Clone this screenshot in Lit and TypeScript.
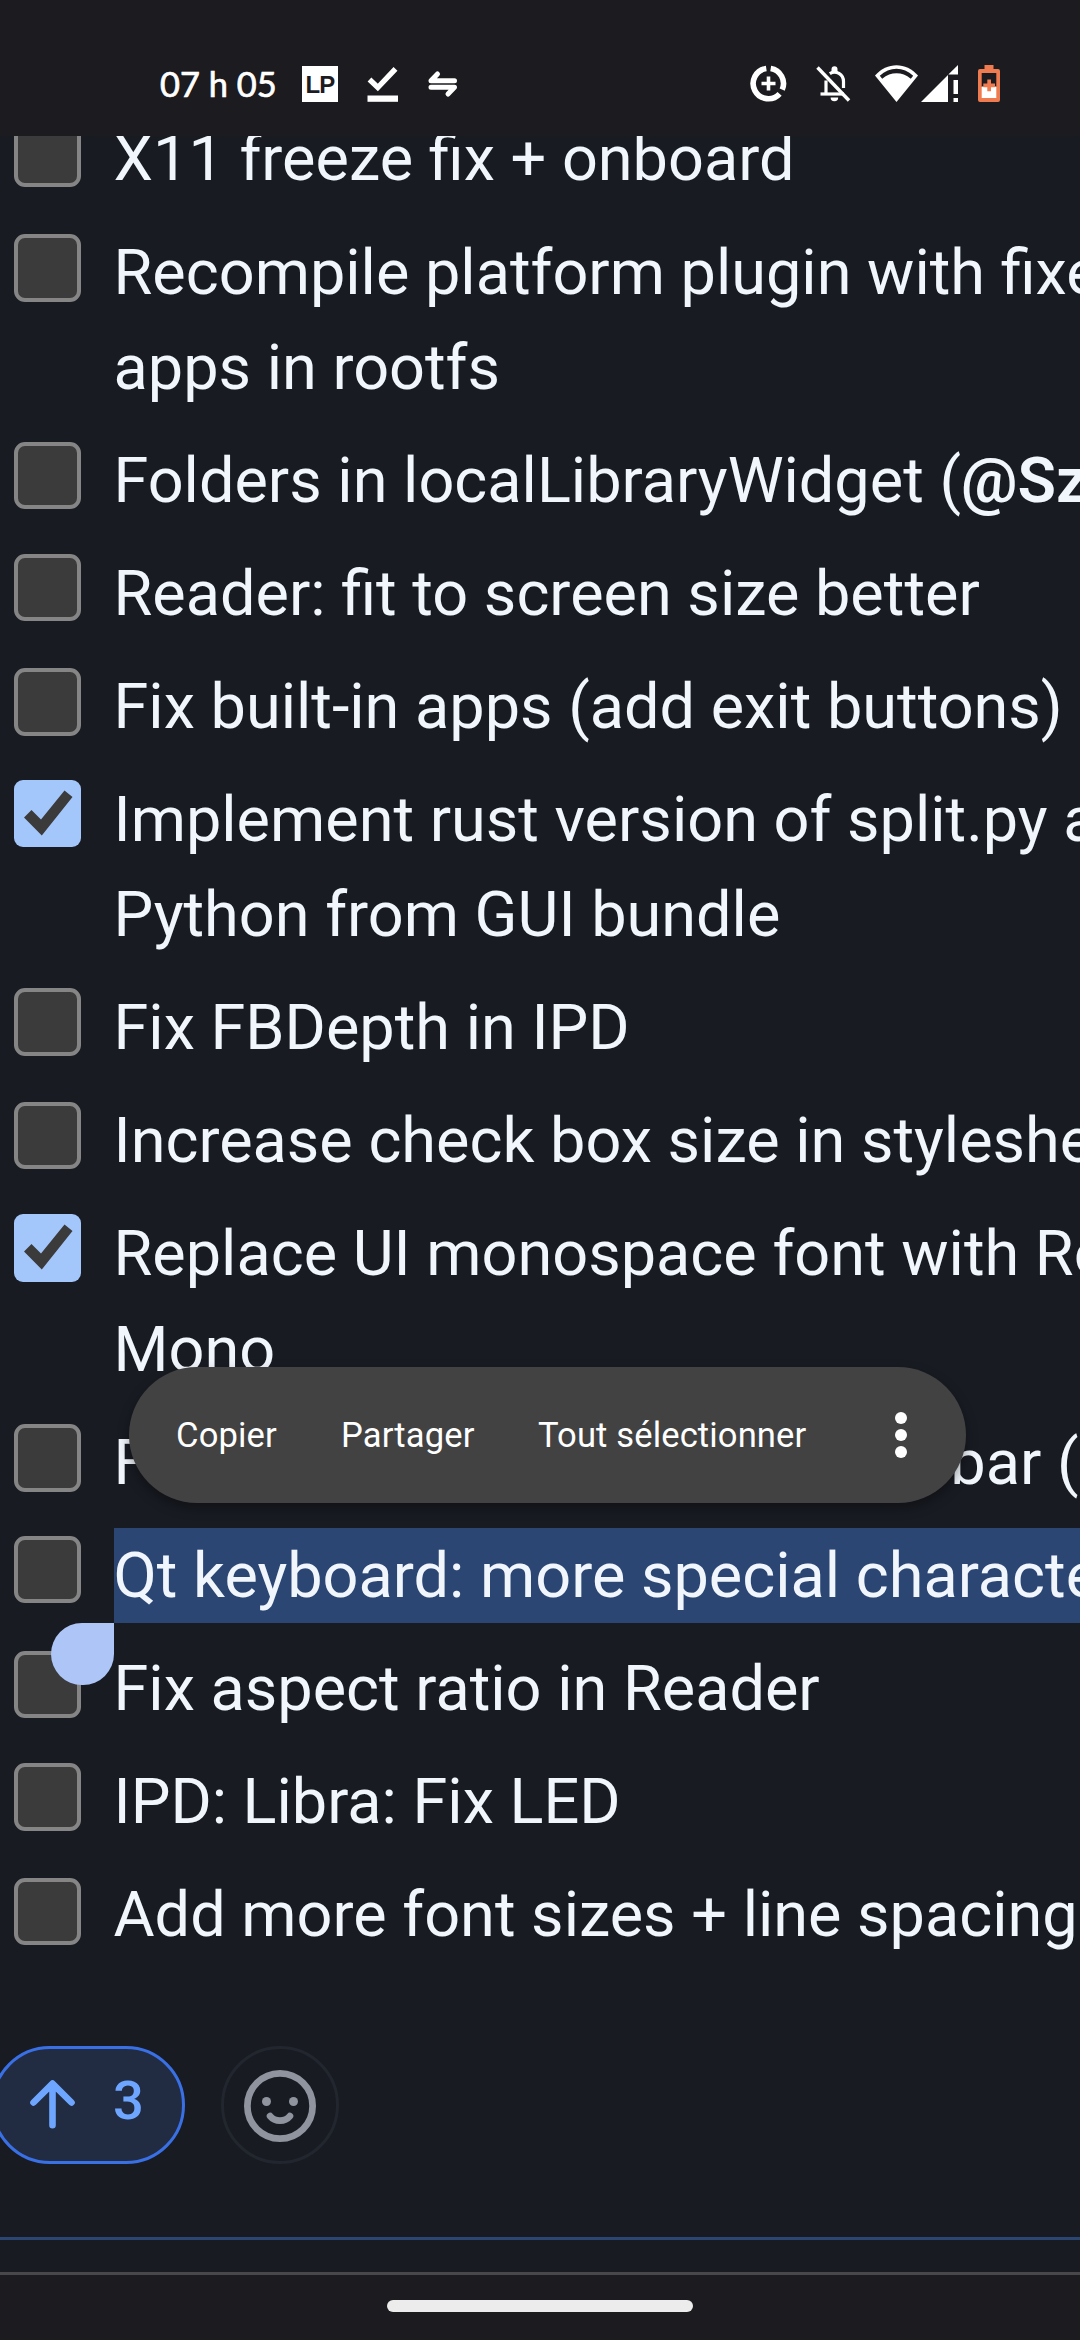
import { LitElement, html, svg, css, nothing, TemplateResult } from "lit";
import { customElement, property } from "lit/decorators.js";

interface Task {
  lines: (string | TemplateResult)[];
  done?: boolean;
  selected?: boolean;
  drop: number;
}

const TASKS: Task[] = [
  { lines: ["X11 freeze fix + onboard"], drop: 7.8 },
  { lines: ["Recompile platform plugin with fixe", "apps in rootfs"], drop: 9.5 },
  { lines: [html`Folders in localLibraryWidget (<b>@Sz</b>`], drop: 9.3 },
  { lines: ["Reader: fit to screen size better"], drop: 7.8 },
  { lines: ["Fix built-in apps (add exit buttons)"], drop: 9.1 },
  { lines: ["Implement rust version of split.py a", "Python from GUI bundle"], done: true, drop: 7.9 },
  { lines: ["Fix FBDepth in IPD"], drop: 7.8 },
  { lines: ["Increase check box size in styleshe"], drop: 8.6 },
  { lines: ["Replace UI monospace font with Ro", "Mono"], done: true, drop: 7.8 },
  { lines: [html`F<span class="gap"></span>bar (`], drop: 9.4 },
  { lines: ["Qt keyboard: more special characte"], selected: true, drop: 8.2 },
  { lines: ["Fix aspect ratio in Reader"], drop: 10.1 },
  { lines: ["IPD: Libra: Fix LED"], drop: 9 },
  { lines: ["Add more font sizes + line spacing"], drop: 10.5 },
];

@customElement("status-bar")
class StatusBar extends LitElement {
  static styles = css`
    :host {
      display: flex;
      align-items: center;
      height: 136px;
      padding: 31px 80px 0 160px;
      box-sizing: border-box;
      background: #1c1b1f;
      color: #fff;
      flex: none;
    }
    svg { display: block; flex: none; }
    .clock {
      font: 400 34.4px/40px Lato, sans-serif;
      width: 142px;
      white-space: nowrap;
      -webkit-text-stroke: 0.7px #fff;
    }
    .lp {
      width: 36px;
      height: 36px;
      background: #fff;
      color: #1c1b1f;
      font: 700 24px/37px "Liberation Sans", Arial, sans-serif;
      letter-spacing: -0.8px;
      text-align: center;
      margin-right: 29px;
    }
    .check { margin-right: 30px; }
    .swap { margin-right: auto; }
    .saver { margin-right: 29px; }
    .bell { margin-right: 24px; }
    .wifi { margin-right: 3px; }
    .signal { margin-right: 20px; }
  `;
  render() {
    return html`
      <div class="clock">07 h 05</div>
      <div class="lp">LP</div>
      <svg class="check" width="31" height="36" viewBox="0 0 31 36">
        <path d="M2.5 13.5 10.8 21.5 28.5 2.8" fill="none" stroke="#fff" stroke-width="5.4" />
        <path d="M0.5 29.5h30.5v6.3H0.5z" fill="#fff" />
      </svg>
      <svg class="swap" width="30" height="28" viewBox="0 0 30 28" fill="none" stroke="#fff" stroke-width="5" stroke-linejoin="round" stroke-linecap="round">
        <path d="M26.500 10.800H3L9.500 4" />
        <path d="M3 17.200H26.500L20 24" />
      </svg>
      <svg class="saver" width="37" height="37" viewBox="0 0 37 37" fill="none" stroke="#fff">
        <path d="M20.7 3.5A15.2 15.2 0 0 1 32.2 24.6M29.6 28.8A15.2 15.2 0 1 1 16.3 3.5" stroke-width="5.6" />
        <path d="M18.5 11.5v14M11.5 18.5h14" stroke-width="3.6" />
      </svg>
      <svg class="bell" width="35" height="37" viewBox="0 0 35 37">
        <g fill="none" stroke="#fff" stroke-width="3.2">
          <path d="M4.5 29H28" />
          <path d="M10 28V15.5" />
          <path d="M13.8 8.6C20 4.5 27.5 9.5 27.5 16.5V23" />
        </g>
        <path d="M15.5 7V4.2a3 3 0 0 1 6 0V7zM14.6 32.5h7.6a3.8 3.8 0 0 1-7.6 0z" fill="#fff" />
        <path d="M1.5 2.5 33 35.5" stroke="#fff" stroke-width="3.4" />
      </svg>
      <svg class="wifi" width="43" height="37" viewBox="0 0 43 37">
        <path d="M0 10.6C12-3.2 31-3.2 43 10.6L21.5 37z" fill="#fff" />
        <path d="M4.8 10.8C14.5 1.5 28.5 1.5 38.2 10.8L35.800 13.800C27 6.500 16 6.500 7.200 13.800z" fill="#1c1b1f" />
      </svg>
      <svg class="signal" width="37" height="37" viewBox="0 0 37 37" fill="#fff">
        <path d="M37 0V9.600H27.300z" />
        <path d="M27 10V37H0z" />
        <path d="M32.500 15h4.500v14h-4.500zM32.500 33h4.500v4h-4.500z" />
      </svg>
      <svg width="22" height="37" viewBox="0 0 22 37">
        <path d="M6.500 0h9v4H20a2 2 0 0 1 2 2v29a2 2 0 0 1-2 2H2a2 2 0 0 1-2-2V6a2 2 0 0 1 2-2h4.500z" fill="#ef7b50" />
        <path d="M3.700 8h14.600v14H3.700z" fill="#1c1b1f" />
        <path d="M3.700 21.500h14.600v11.500H3.700z" fill="#fff" />
        <path d="M9.300 14.500h3.700v4h4v3.700h-4v4H9.300v-4h-4v-3.700h4z" fill="#ef7b50" />
      </svg>
    `;
  }
}

@customElement("task-row")
class TaskRow extends LitElement {
  @property({ attribute: false }) task!: Task;
  static styles = css`
    :host {
      display: flex;
      margin-bottom: 18.1px;
      padding-left: 13.5px;
    }
    .box {
      box-sizing: border-box;
      flex: none;
      width: 67.5px;
      height: 67.5px;
      border: 4.3px solid #858585;
      border-radius: 11px;
      background: #3b3b3b;
      margin-right: 32.5px;
    }
    .box.done {
      border: 0;
      border-radius: 9px;
      background: #a3c6fb;
    }
    .box svg { display: block; }
    .text {
      flex: 1;
      min-width: 0;
      white-space: nowrap;
      font: 400 63px/95.03px Roboto, sans-serif;
      color: #f0f6fc;
    }
    .selected { background: #2c4674; }
    b { font-weight: 600; }
    .gap { display: inline-block; width: 802px; }
  `;
  render() {
    const t = this.task;
    return html`
      <div class="box ${t.done ? "done" : ""}" style="margin-top:${t.drop}px">
        ${t.done
          ? html`<svg width="67.5" height="67.5" viewBox="0 0 67.5 67.5">
              ${svg`<path d="M10 37.5 17.5 30 27 39.5 50.5 10.5 58.5 17 27.8 55.5z" fill="#3b3b3b" />`}
            </svg>`
          : nothing}
      </div>
      <div class="text ${t.selected ? "selected" : ""}">
        ${t.lines.map((l) => html`<div>${l}</div>`)}
      </div>
    `;
  }
}

@customElement("app-root")
class AppRoot extends LitElement {
  static styles = css`
    :host {
      display: flex;
      flex-direction: column;
      position: relative;
      width: 1080px;
      height: 2340px;
      overflow: hidden;
      background: #181b22;
      font-family: Roboto, sans-serif;
    }
    .page {
      height: 2136px;
      flex: none;
      overflow: hidden;
      box-sizing: border-box;
      display: flex;
      flex-direction: column;
    }
    .tasks { margin-top: -24.6px; flex: none; }
    .reactions {
      display: flex;
      gap: 36px;
      margin: 65.7px 0 72.7px -9px;
      flex: none;
    }
    .chip {
      box-sizing: border-box;
      height: 118px;
      border-radius: 59px;
      border: 3px solid #3a70e6;
      background: #212c42;
      width: 194px;
      display: flex;
      align-items: center;
      padding-left: 36px;
      color: #6ea6ff;
      font: 500 54.3px/60px Roboto, sans-serif;
    }
    .chip svg { margin-right: 38px; }
    .count { margin-top: -7px; }
    .chip.smile {
      width: 118px;
      padding: 0 0 0 2px;
      justify-content: center;
      border-color: #22262e;
      background: none;
    }
    .chip.smile svg { margin: 2px 2px 0 0; }
    .rule { height: 3px; background: #2c4674; flex: none; }
    .nav {
      flex: 1;
      border-top: 3px solid #48484b;
      background: #1c1b1f;
      display: flex;
      justify-content: center;
      padding-top: 25px;
    }
    .pill { width: 306px; height: 12px; border-radius: 6px; background: #ececec; }
    .menu {
      position: absolute;
      left: 129px;
      top: 1367px;
      width: 837px;
      height: 136px;
      box-sizing: border-box;
      border-radius: 68px;
      background: #424242;
      box-shadow: 0 5px 12px rgba(0, 0, 0, 0.35);
      display: flex;
      align-items: center;
      padding: 0 58px 0 47px;
      color: #fff;
      font: 400 34.6px/40px Roboto, sans-serif;
      letter-spacing: 0.12px;
      white-space: nowrap;
    }
    .item-a { width: 165px; }
    .item-b { width: 197px; }
    .item-c { flex: 1; }
    .handle {
      position: absolute;
      left: 51px;
      top: 1623px;
      width: 63px;
      height: 62px;
      border-radius: 31px 0 31px 31px;
      background: #aec6f7;
    }
  `;
  render() {
    return html`
      <status-bar></status-bar>
      <div class="page">
        <div class="tasks">${TASKS.map((t) => html`<task-row .task=${t}></task-row>`)}</div>
        <div class="reactions">
          <div class="chip">
            <svg width="45" height="49" viewBox="0 0 45 49" fill="none" stroke="#6ea6ff" stroke-width="6.6" stroke-linecap="round" stroke-linejoin="round">
              <path d="M3.5 22.5 22.5 3.6 41.5 22.5M22.5 4V45.3" />
            </svg>
            <span class="count">3</span>
          </div>
          <div class="chip smile">
            <svg width="72" height="72" viewBox="0 0 16 16">
              <circle cx="8" cy="8" r="7.25" fill="none" stroke="#8f949e" stroke-width="1.5" />
              <circle cx="5" cy="7" r="1" fill="#8f949e" />
              <circle cx="11" cy="7" r="1" fill="#8f949e" />
              <path d="M5.8 10.25C6.9 11.6 9.1 11.6 10.2 10.25" fill="none" stroke="#8f949e" stroke-width="1.5" stroke-linecap="round" />
            </svg>
          </div>
        </div>
        <div class="rule"></div>
      </div>
      <div class="nav"><div class="pill"></div></div>
      <div class="menu">
        <div class="item-a">Copier</div>
        <div class="item-b">Partager</div>
        <div class="item-c">Tout sélectionner</div>
        <svg width="14" height="48" viewBox="0 0 14 48" fill="#fff">
          <circle cx="7" cy="7" r="6" /><circle cx="7" cy="24" r="6" /><circle cx="7" cy="41" r="6" />
        </svg>
      </div>
      <div class="handle"></div>
    `;
  }
}
